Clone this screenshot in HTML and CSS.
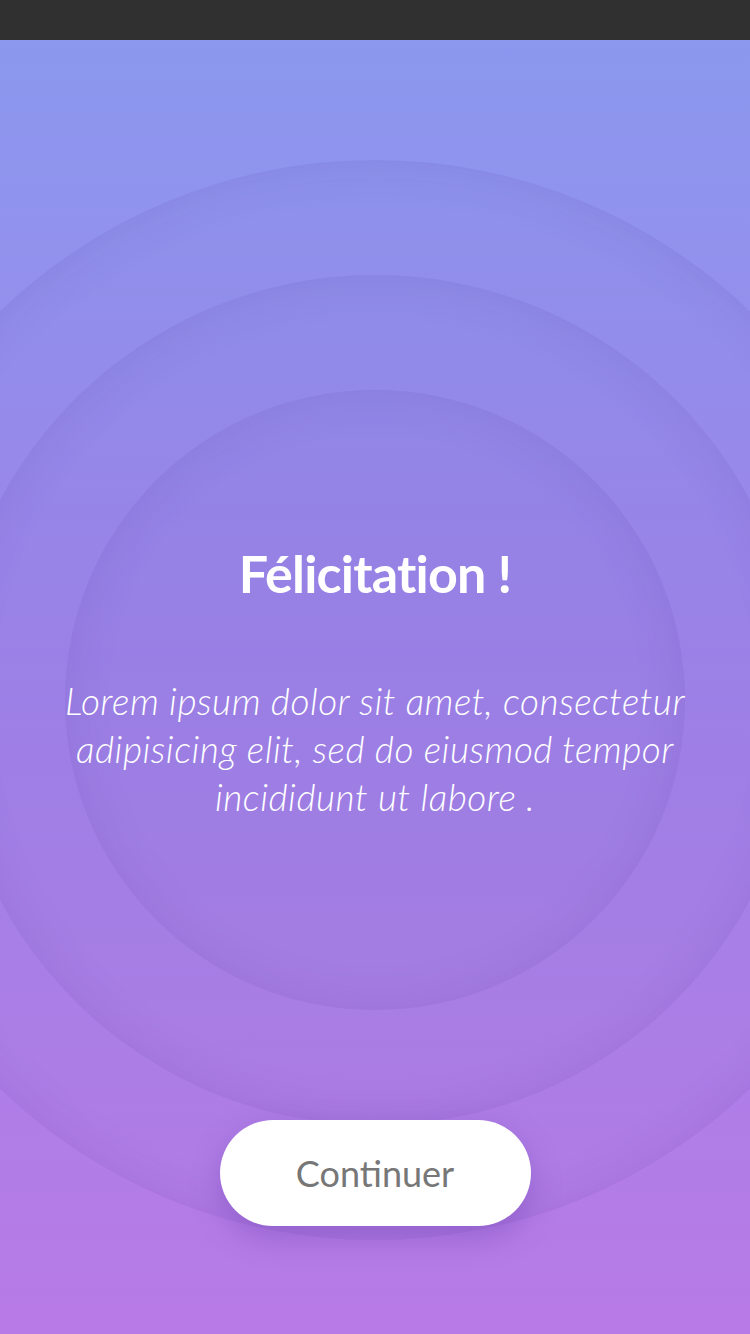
FILE: index.html
```html
<!DOCTYPE html>
<html lang="fr">
<head>
<meta charset="utf-8">
<title>Félicitation</title>
<link rel="stylesheet" href="styles.css">
</head>
<body>
<div class="statusbar"></div>
<main class="screen">
  <div class="rings" aria-hidden="true">
    <div class="ring ring-outer">
      <div class="ring ring-middle">
        <div class="ring ring-inner"></div>
      </div>
    </div>
  </div>
  <section class="content">
    <h1 class="title">Félicitation !</h1>
    <p class="text">Lorem ipsum dolor sit amet, consectetur adipisicing elit, sed do eiusmod tempor incididunt ut labore .</p>
  </section>
  <div class="actions">
    <button class="btn" type="button">Continuer</button>
  </div>
</main>
</body>
</html>
```

FILE: styles.css
```css
* { box-sizing: border-box; }
html, body { margin: 0; padding: 0; }
body {
  width: 750px;
  height: 1334px;
  overflow: hidden;
  font-family: "Lato", "Open Sans", sans-serif;
  background: #303030;
}
.statusbar {
  height: 40px;
  background: #303030;
}
.screen {
  position: relative;
  height: 1294px;
  overflow: hidden;
  background: linear-gradient(180deg, #8b98ee 0%, #a084ea 50%, #b87ae6 100%);
  display: flex;
  flex-direction: column;
  align-items: center;
}
.rings {
  position: absolute;
  left: 50%;
  top: 120px;
  width: 1080px;
  height: 1080px;
  margin-left: -540px;
}
.ring {
  border-radius: 50%;
  display: flex;
  align-items: center;
  justify-content: center;
  background: rgba(70, 50, 150, 0.015);
  box-shadow: inset 0 0 50px rgba(60, 40, 140, 0.11);
}
.ring-outer { width: 1080px; height: 1080px; }
.ring-middle { width: 850px; height: 850px; }
.ring-inner { width: 620px; height: 620px; }

.content {
  position: relative;
  display: flex;
  flex-direction: column;
  align-items: center;
  padding-top: 497px;
  width: 100%;
}
.title {
  margin: 0;
  color: #fff;
  font-weight: 700;
  font-size: 52px;
  letter-spacing: -0.8px;
  line-height: 72px;
}
.text {
  margin: 68px 0 0;
  width: 700px;
  text-align: center;
  color: #fff;
  font-style: italic;
  font-weight: 300;
  font-size: 37px;
  line-height: 48px;
  letter-spacing: 0.5px;
}
.actions {
  position: relative;
  margin-top: auto;
  margin-bottom: 108px;
}
.btn {
  width: 311px;
  height: 106px;
  border: none;
  border-radius: 53px;
  background: #fff;
  color: #777;
  font-family: "Lato", "Open Sans", sans-serif;
  font-size: 36px;
  font-weight: 400;
  box-shadow: 0 12px 30px rgba(100, 60, 170, 0.35);
}
```
